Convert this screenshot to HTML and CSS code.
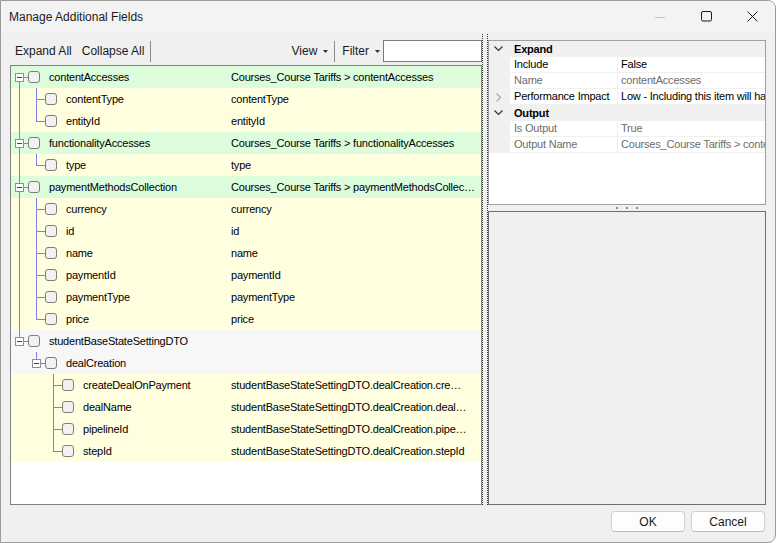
FILE: index.html
```html
<!DOCTYPE html>
<html lang="en">
<head>
    <meta charset="UTF-8">
    <title>Manage Additional Fields</title>
    <link rel="stylesheet" href="styles.css">
</head>
<body>
    <div class="window">
        <div class="titlebar">
            <span class="title">Manage Additional Fields</span>
            <div class="caption-buttons">
                <span class="caption-btn">
                    <svg width="10" height="10" viewBox="0 0 10 10"><path d="M0 5.5h10" stroke="#c4c4c4" stroke-width="1"/></svg>
                </span>
                <span class="caption-btn">
                    <svg width="11" height="11" viewBox="0 0 11 11"><rect x="0.5" y="0.5" width="10" height="9.5" rx="1.5" fill="none" stroke="#1a1a1a" stroke-width="1"/></svg>
                </span>
                <span class="caption-btn">
                    <svg width="11" height="11" viewBox="0 0 11 11"><path d="M0.5 0.5l10 10M10.5 0.5l-10 10" stroke="#1a1a1a" stroke-width="1"/></svg>
                </span>
            </div>
        </div>

        <div class="content">
            <div class="panes">
                <div class="left-pane">
                    <div class="toolbar">
                        <span class="tool-btn">Expand All</span>
                        <span class="tool-btn">Collapse All</span>
                        <span class="tool-sep"></span>
                        <span class="tool-btn drop push-right">View<svg class="drop-arrow" width="5" height="3" viewBox="0 0 5 3"><path d="M0 0h5L2.5 3z" fill="#333"/></svg></span>
                        <span class="tool-sep"></span>
                        <span class="tool-btn drop filter">Filter<svg class="drop-arrow" width="5" height="3" viewBox="0 0 5 3"><path d="M0 0h5L2.5 3z" fill="#333"/></svg></span>
                        <input class="filter-input" type="text">
                    </div>

                    <div class="tree">
                        <div class="row mapped">
                            <div class="col1"><span class="slot exp-below"><span class="exp-box"></span></span><span class="check"></span><span class="name">contentAccesses</span></div>
                            <div class="col2">Courses_Course Tariffs &gt; contentAccesses</div>
                        </div>
                        <div class="row field">
                            <div class="col1"><span class="slot line"></span><span class="slot tee"></span><span class="check"></span><span class="name">contentType</span></div>
                            <div class="col2">contentType</div>
                        </div>
                        <div class="row field">
                            <div class="col1"><span class="slot line"></span><span class="slot ell"></span><span class="check"></span><span class="name">entityId</span></div>
                            <div class="col2">entityId</div>
                        </div>
                        <div class="row mapped">
                            <div class="col1"><span class="slot exp-both"><span class="exp-box"></span></span><span class="check"></span><span class="name">functionalityAccesses</span></div>
                            <div class="col2">Courses_Course Tariffs &gt; functionalityAccesses</div>
                        </div>
                        <div class="row field">
                            <div class="col1"><span class="slot line"></span><span class="slot ell"></span><span class="check"></span><span class="name">type</span></div>
                            <div class="col2">type</div>
                        </div>
                        <div class="row mapped">
                            <div class="col1"><span class="slot exp-both"><span class="exp-box"></span></span><span class="check"></span><span class="name">paymentMethodsCollection</span></div>
                            <div class="col2">Courses_Course Tariffs &gt; paymentMethodsCollection</div>
                        </div>
                        <div class="row field">
                            <div class="col1"><span class="slot line"></span><span class="slot tee"></span><span class="check"></span><span class="name">currency</span></div>
                            <div class="col2">currency</div>
                        </div>
                        <div class="row field">
                            <div class="col1"><span class="slot line"></span><span class="slot tee"></span><span class="check"></span><span class="name">id</span></div>
                            <div class="col2">id</div>
                        </div>
                        <div class="row field">
                            <div class="col1"><span class="slot line"></span><span class="slot tee"></span><span class="check"></span><span class="name">name</span></div>
                            <div class="col2">name</div>
                        </div>
                        <div class="row field">
                            <div class="col1"><span class="slot line"></span><span class="slot tee"></span><span class="check"></span><span class="name">paymentId</span></div>
                            <div class="col2">paymentId</div>
                        </div>
                        <div class="row field">
                            <div class="col1"><span class="slot line"></span><span class="slot tee"></span><span class="check"></span><span class="name">paymentType</span></div>
                            <div class="col2">paymentType</div>
                        </div>
                        <div class="row field">
                            <div class="col1"><span class="slot line"></span><span class="slot ell"></span><span class="check"></span><span class="name">price</span></div>
                            <div class="col2">price</div>
                        </div>
                        <div class="row group">
                            <div class="col1"><span class="slot exp-above"><span class="exp-box"></span></span><span class="check"></span><span class="name">studentBaseStateSettingDTO</span></div>
                            <div class="col2"></div>
                        </div>
                        <div class="row group">
                            <div class="col1"><span class="slot"></span><span class="slot exp-above"><span class="exp-box"></span></span><span class="check"></span><span class="name">dealCreation</span></div>
                            <div class="col2"></div>
                        </div>
                        <div class="row field deep">
                            <div class="col1"><span class="slot"></span><span class="slot"></span><span class="slot tee"></span><span class="check"></span><span class="name">createDealOnPayment</span></div>
                            <div class="col2">studentBaseStateSettingDTO.dealCreation.createDealOnPayment</div>
                        </div>
                        <div class="row field deep">
                            <div class="col1"><span class="slot"></span><span class="slot"></span><span class="slot tee"></span><span class="check"></span><span class="name">dealName</span></div>
                            <div class="col2">studentBaseStateSettingDTO.dealCreation.dealName</div>
                        </div>
                        <div class="row field deep">
                            <div class="col1"><span class="slot"></span><span class="slot"></span><span class="slot tee"></span><span class="check"></span><span class="name">pipelineId</span></div>
                            <div class="col2">studentBaseStateSettingDTO.dealCreation.pipelineId</div>
                        </div>
                        <div class="row field deep">
                            <div class="col1"><span class="slot"></span><span class="slot"></span><span class="slot ell"></span><span class="check"></span><span class="name">stepId</span></div>
                            <div class="col2">studentBaseStateSettingDTO.dealCreation.stepId</div>
                        </div>
                    </div>
                </div>

                <div class="v-splitter"></div>

                <div class="right-pane">
                    <div class="prop-grid">
                        <div class="pg-row pg-cat">
                            <span class="pg-gutter"><svg width="9" height="6" viewBox="0 0 9 6"><path d="M0.5 0.5l4 4 4-4" fill="none" stroke="#333" stroke-width="1.2"/></svg></span>
                            <span class="pg-cat-name">Expand</span>
                        </div>
                        <div class="pg-row">
                            <span class="pg-gutter"></span>
                            <span class="pg-label">Include</span>
                            <span class="pg-value">False</span>
                        </div>
                        <div class="pg-row readonly">
                            <span class="pg-gutter"></span>
                            <span class="pg-label">Name</span>
                            <span class="pg-value">contentAccesses</span>
                        </div>
                        <div class="pg-row">
                            <span class="pg-gutter"><svg width="6" height="9" viewBox="0 0 6 9"><path d="M0.5 0.5l4 4-4 4" fill="none" stroke="#a8a8a8" stroke-width="1.1"/></svg></span>
                            <span class="pg-label">Performance Impact</span>
                            <span class="pg-value">Low - Including this item will have little impact on performance</span>
                        </div>
                        <div class="pg-row pg-cat">
                            <span class="pg-gutter"><svg width="9" height="6" viewBox="0 0 9 6"><path d="M0.5 0.5l4 4 4-4" fill="none" stroke="#333" stroke-width="1.2"/></svg></span>
                            <span class="pg-cat-name">Output</span>
                        </div>
                        <div class="pg-row readonly">
                            <span class="pg-gutter"></span>
                            <span class="pg-label">Is Output</span>
                            <span class="pg-value">True</span>
                        </div>
                        <div class="pg-row readonly">
                            <span class="pg-gutter"></span>
                            <span class="pg-label">Output Name</span>
                            <span class="pg-value">Courses_Course Tariffs &gt; contentAccesses</span>
                        </div>
                    </div>
                    <div class="h-splitter"><i></i><i></i><i></i></div>
                    <div class="details"></div>
                </div>
            </div>

            <div class="footer">
                <button type="button">OK</button>
                <button type="button">Cancel</button>
            </div>
        </div>
    </div>
</body>
</html>
```

FILE: styles.css
```css
body {
    margin: 0;
    font-family: 'Liberation Sans', Arial, sans-serif;
    background-color: #fff;
}
.window {
    width: 776px;
    height: 543px;
    box-sizing: border-box;
    border: 1px solid #9a9a9a;
    border-radius: 0 8px 8px 0;
    background-color: #f0f0f0;
    display: flex;
    flex-direction: column;
    overflow: hidden;
}
.titlebar {
    height: 31px;
    flex: none;
    display: flex;
    align-items: center;
    background-color: #f3f3f3;
    padding-left: 8px;
}
.title {
    font-size: 12px;
    color: #1a1a1a;
}
.caption-buttons {
    margin-left: auto;
    display: flex;
}
.caption-btn {
    width: 46px;
    height: 31px;
    display: flex;
    align-items: center;
    justify-content: center;
}
.content {
    flex: 1;
    display: flex;
    flex-direction: column;
    padding: 8px 9px 0 9px;
}
.panes {
    height: 465px;
    display: flex;
}

/* left side: toolbar + tree */
.left-pane {
    width: 472px;
    flex: none;
    min-width: 0;
    display: flex;
    flex-direction: column;
}
.toolbar {
    height: 22px;
    margin-bottom: 3px;
    display: flex;
    align-items: center;
    font-size: 12px;
    color: #1a1a1a;
}
.tool-btn {
    padding: 0 5px;
    display: flex;
    align-items: center;
}
.tool-btn.drop {
    padding: 0 5px 0 7px;
}
.tool-btn.filter {
    padding-right: 3px;
}
.push-right {
    margin-left: auto;
}
.drop-arrow {
    margin-left: 6px;
}
.tool-sep {
    width: 1px;
    height: 21px;
    margin-left: 1px;
    background-color: #8c8c8c;
}
.filter-input {
    width: 99px;
    height: 22px;
    box-sizing: border-box;
    margin: 0;
    border: 1px solid #7a7a7a;
    background-color: #fff;
    outline: none;
}
.tree {
    flex: 1;
    min-width: 0;
    border: 1px solid #828282;
    background-color: #fff;
    font-size: 11px;
    letter-spacing: -0.2px;
    color: #000;
}
.row {
    height: 22px;
    display: flex;
    align-items: center;
}
.row.mapped {
    background-color: #dcfcdc;
}
.row.field {
    background-color: #ffffe0;
}
.row.group {
    background-color: #f7f7f7;
}
.col1 {
    width: 220px;
    flex: none;
    display: flex;
    align-items: center;
    overflow: hidden;
    white-space: nowrap;
}
.col2 {
    flex: 1;
    min-width: 0;
    padding-right: 4px;
    overflow: hidden;
    white-space: nowrap;
    text-overflow: ellipsis;
}
.row.deep .col2 {
    padding-right: 14px;
}

/* tree guide lines */
.slot {
    width: 17px;
    height: 22px;
    flex: none;
    display: flex;
    align-items: flex-start;
    background-repeat: no-repeat;
}
.slot.line {
    background-image: linear-gradient(#7a80e6, #7a80e6);
    background-size: 1px 22px;
    background-position: 8px 0;
}
.slot.tee {
    background-image: linear-gradient(#7a80e6, #7a80e6), linear-gradient(#7a80e6, #7a80e6);
    background-size: 1px 22px, 9px 1px;
    background-position: 8px 0, 8px 11px;
}
.slot.ell {
    background-image: linear-gradient(#7a80e6, #7a80e6), linear-gradient(#7a80e6, #7a80e6);
    background-size: 1px 12px, 9px 1px;
    background-position: 8px 0, 8px 11px;
}
.slot.exp-below {
    background-image: linear-gradient(#7a80e6, #7a80e6), linear-gradient(#7a80e6, #7a80e6);
    background-size: 1px 11px, 9px 1px;
    background-position: 8px 11px, 8px 11px;
}
.slot.exp-both {
    background-image: linear-gradient(#7a80e6, #7a80e6), linear-gradient(#7a80e6, #7a80e6);
    background-size: 1px 22px, 9px 1px;
    background-position: 8px 0, 8px 11px;
}
.slot.exp-above {
    background-image: linear-gradient(#7a80e6, #7a80e6), linear-gradient(#7a80e6, #7a80e6);
    background-size: 1px 12px, 9px 1px;
    background-position: 8px 0, 8px 11px;
}
.exp-box {
    width: 9px;
    height: 9px;
    box-sizing: border-box;
    margin: 7px 0 0 4px;
    border: 1px solid #8f8f9a;
    background-color: #fff;
    display: flex;
    align-items: center;
    justify-content: center;
}
.exp-box::after {
    content: '';
    width: 5px;
    height: 1px;
    background-color: #2a3c9c;
}
.check {
    width: 12px;
    height: 12px;
    flex: none;
    box-sizing: border-box;
    border: 1px solid #7e7e7e;
    border-radius: 3px;
    background-color: #f2f2f2;
}
.name {
    margin-left: 9px;
}

/* splitters */
.v-splitter {
    width: 6px;
    flex: none;
    box-sizing: border-box;
    margin-top: -6px;
    border-left: 1px dotted #333;
    border-right: 1px dotted #333;
}
.right-pane {
    flex: 1;
    min-width: 0;
    display: flex;
    flex-direction: column;
}
.h-splitter {
    height: 6px;
    display: flex;
    justify-content: center;
    align-items: center;
    gap: 8px;
}
.h-splitter i {
    width: 2px;
    height: 2px;
    background-color: #8a8a8a;
}

/* property grid */
.prop-grid {
    height: 165px;
    box-sizing: border-box;
    border: 1px solid #a0a0a0;
    background-color: #fff;
    font-size: 11px;
    letter-spacing: -0.2px;
    color: #000;
    overflow: hidden;
}
.pg-row {
    height: 16px;
    display: flex;
    background-color: #f0f0f0;
}
.pg-gutter {
    width: 21px;
    flex: none;
    display: flex;
    align-items: center;
    justify-content: center;
    padding-right: 2px;
    box-sizing: border-box;
}
.pg-cat {
    font-weight: bold;
    line-height: 16px;
}
.pg-cat-name {
    padding-left: 4px;
}
.pg-label {
    width: 107px;
    height: 15px;
    line-height: 15px;
    flex: none;
    margin-right: 1px;
    padding-left: 4px;
    box-sizing: border-box;
    background-color: #fff;
    white-space: nowrap;
    overflow: hidden;
}
.pg-value {
    flex: 1;
    min-width: 0;
    height: 15px;
    line-height: 15px;
    padding-left: 3px;
    background-color: #fff;
    white-space: nowrap;
    overflow: hidden;
}
.pg-row.readonly {
    color: #6d6d6d;
}
.details {
    flex: 1;
    border: 1px solid #6e6e6e;
    background-color: #f0f0f0;
}

/* dialog buttons */
.footer {
    flex: 1;
    display: flex;
    justify-content: flex-end;
    align-items: flex-start;
    gap: 6px;
    padding: 6px 1px 0 0;
}
.footer button {
    width: 74px;
    height: 21px;
    font-family: 'Liberation Sans', Arial, sans-serif;
    font-size: 12px;
    color: #1a1a1a;
    background-color: #fdfdfd;
    border: 1px solid #d0d0d0;
    border-bottom-color: #bdbdbd;
    border-radius: 4px;
    padding: 0;
}
```
